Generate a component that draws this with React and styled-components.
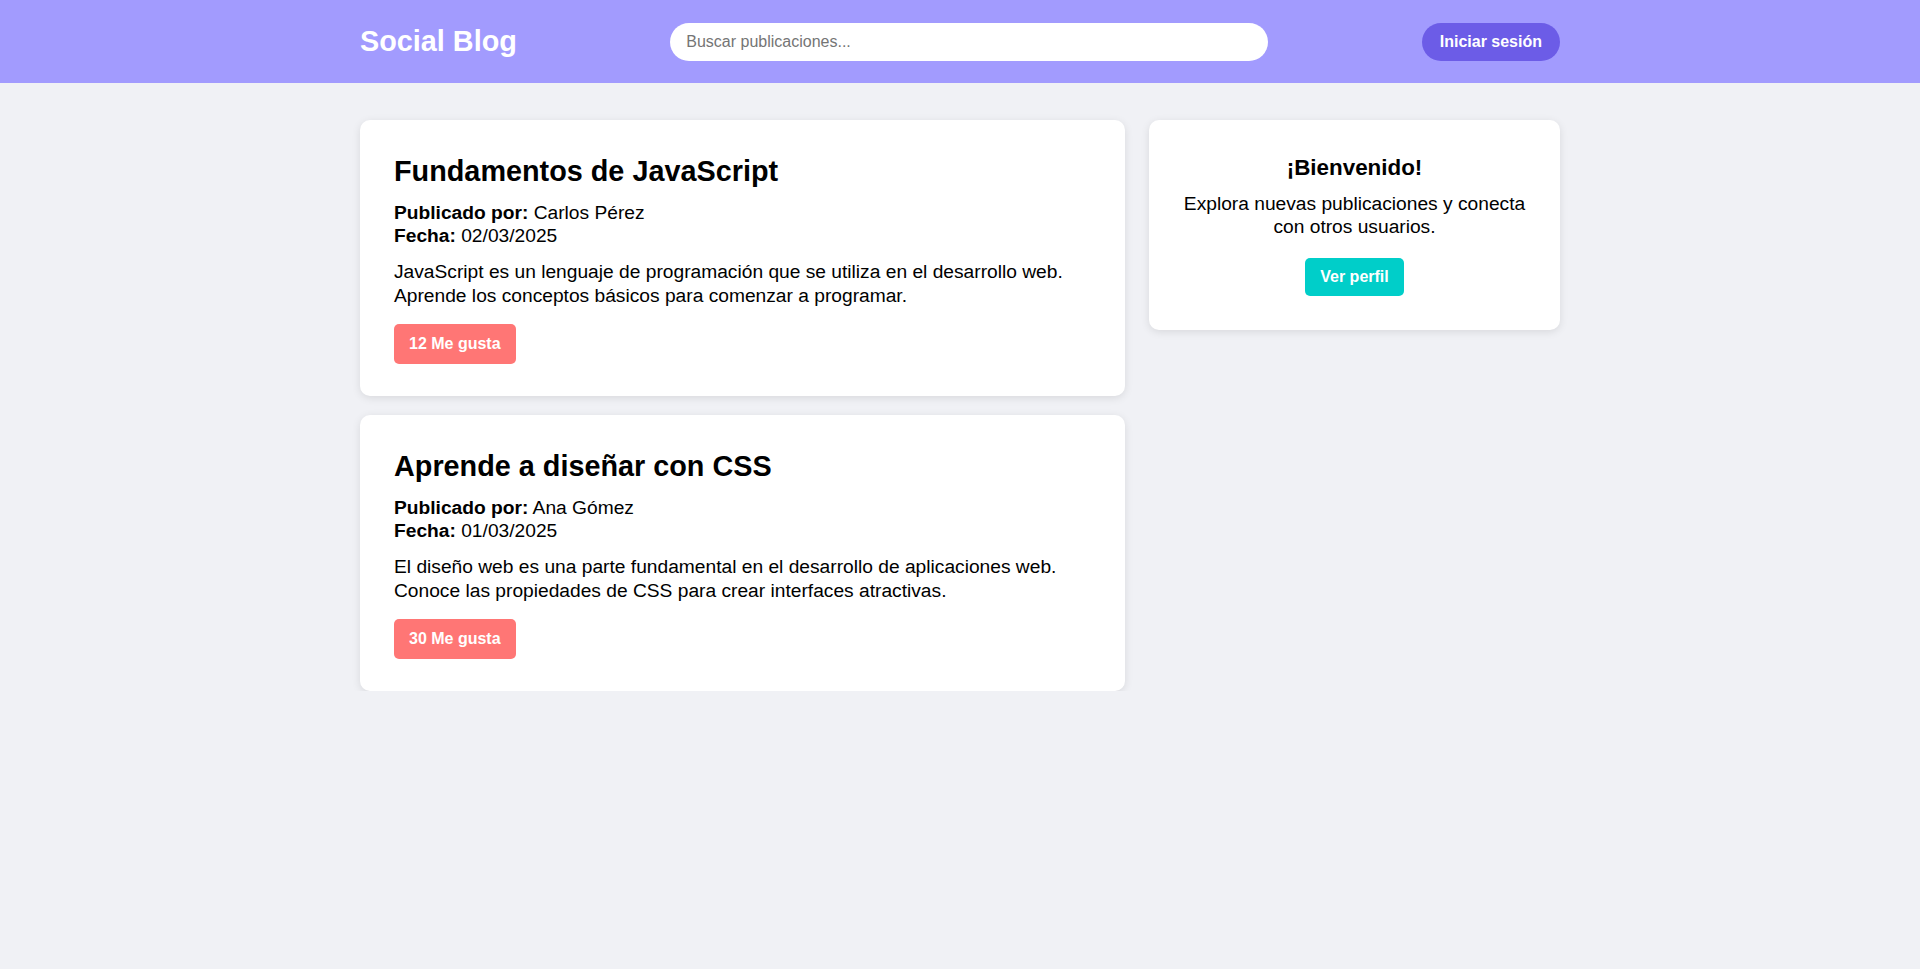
import React from "react";
import styled, { createGlobalStyle } from "styled-components";

const GlobalStyle = createGlobalStyle`
  * { box-sizing: border-box; }
  html, body { margin: 0; padding: 0; }
  body {
    background: #f0f1f5;
    font-family: "Liberation Sans", Arial, Helvetica, sans-serif;
    color: #000;
  }
`;

const Header = styled.header`
  background: #a29bfe;
  height: 83px;
  display: flex;
  align-items: center;
`;

const HeaderInner = styled.div`
  width: 1200px;
  margin: 0 auto;
  display: flex;
  align-items: center;
  justify-content: space-between;
`;

const Logo = styled.h1`
  margin: 0;
  color: #fff;
  font-size: 28.8px;
  font-weight: 700;
`;

const Search = styled.input`
  width: 598px;
  height: 38px;
  border: none;
  border-radius: 20px;
  padding: 10px 16px;
  font-size: 16px;
  font-family: inherit;
  outline: none;
  &::placeholder { color: #757575; }
`;

const LoginButton = styled.button`
  background: #6c5ce7;
  color: #fff;
  border: none;
  border-radius: 20px;
  height: 38px;
  padding: 0 18px;
  font-size: 16px;
  font-weight: 700;
  font-family: inherit;
  cursor: pointer;
`;

const Layout = styled.main`
  width: 1200px;
  margin: 37px auto 0;
  display: flex;
  align-items: flex-start;
  gap: 24px;
`;

const Feed = styled.section`
  flex: 1;
  display: flex;
  flex-direction: column;
  gap: 19px;
`;

const Card = styled.article`
  background: #fff;
  border-radius: 10px;
  box-shadow: 0 2px 8px rgba(0, 0, 0, 0.1);
  padding: 35px 34px 32px;
`;

const Title = styled.h2`
  margin: 0 0 13px;
  font-size: 28.8px;
  font-weight: 700;
`;

const Meta = styled.p`
  margin: 0 0 13px;
  font-size: 19.2px;
  line-height: 1.2;
`;

const Body = styled.p`
  margin: 0 0 15px;
  font-size: 19.2px;
  line-height: 1.27;
`;

const Pill = styled.button`
  background: ${(p) => p.$bg};
  color: #fff;
  border: none;
  border-radius: 5px;
  height: ${(p) => p.$h}px;
  padding: 0 15px;
  font-size: 16px;
  font-weight: 700;
  font-family: inherit;
  cursor: pointer;
`;

const Sidebar = styled.aside`
  flex: 0 0 411px;
  background: #fff;
  border-radius: 10px;
  box-shadow: 0 2px 8px rgba(0, 0, 0, 0.1);
  padding: 35px 32px 34px;
  text-align: center;
`;

const SideTitle = styled.h3`
  margin: 0 0 11px;
  font-size: 22.4px;
  font-weight: 700;
`;

const SideText = styled.p`
  margin: 0 0 20px;
  font-size: 19.2px;
  line-height: 1.2;
`;

const posts = [
  {
    title: "Fundamentos de JavaScript",
    author: "Carlos Pérez",
    date: "02/03/2025",
    body: "JavaScript es un lenguaje de programación que se utiliza en el desarrollo web. Aprende los conceptos básicos para comenzar a programar.",
    likes: 12,
  },
  {
    title: "Aprende a diseñar con CSS",
    author: "Ana Gómez",
    date: "01/03/2025",
    body: "El diseño web es una parte fundamental en el desarrollo de aplicaciones web. Conoce las propiedades de CSS para crear interfaces atractivas.",
    likes: 30,
  },
];

export default function App() {
  return (
    <>
      <GlobalStyle />
      <Header>
        <HeaderInner>
          <Logo>Social Blog</Logo>
          <Search placeholder="Buscar publicaciones..." />
          <LoginButton>Iniciar sesión</LoginButton>
        </HeaderInner>
      </Header>
      <Layout>
        <Feed>
          {posts.map((p) => (
            <Card key={p.title}>
              <Title>{p.title}</Title>
              <Meta>
                <strong>Publicado por:</strong> {p.author}
                <br />
                <strong>Fecha:</strong> {p.date}
              </Meta>
              <Body>{p.body}</Body>
              <Pill $bg="#ff7675" $h={40}>{p.likes} Me gusta</Pill>
            </Card>
          ))}
        </Feed>
        <Sidebar>
          <SideTitle>¡Bienvenido!</SideTitle>
          <SideText>Explora nuevas publicaciones y conecta con otros usuarios.</SideText>
          <Pill $bg="#00cec9" $h={38}>Ver perfil</Pill>
        </Sidebar>
      </Layout>
    </>
  );
}
